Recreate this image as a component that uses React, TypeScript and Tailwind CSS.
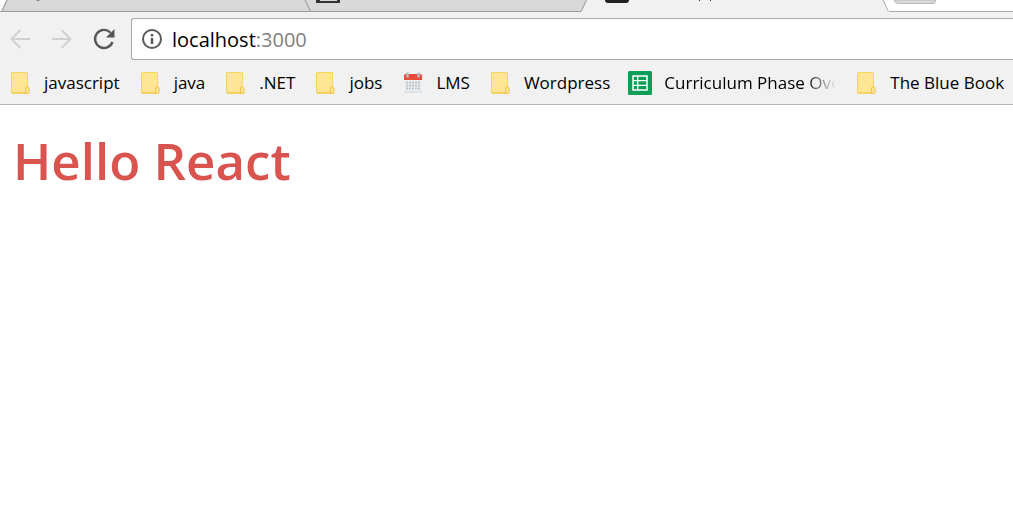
import type { ReactNode } from "react";

function FolderIcon() {
  return (
    <svg width="24" height="24" viewBox="0 0 24 24" aria-hidden="true">
      <rect x="3.5" y="1.5" width="16" height="20.500" rx="0.5" fill="#ffe694" stroke="#f7d664" />
      <path d="M4 22h16" stroke="#f3cd52" strokeWidth="1.500" />
      <path d="M3.5 2v20" stroke="#f2d169" />
      <path d="M17.5 22v-5q0-1 1.200-1h1q1.300 0 1.300 1v4.500q0 1-1 1h-2.500z" fill="#ffe694" stroke="#edc344" />
    </svg>
  );
}

function CalendarIcon() {
  return (
    <svg width="24" height="24" viewBox="0 0 24 24" aria-hidden="true">
      <rect x="4" y="5" width="18" height="16" rx="1" fill="#eceff1" />
      <path d="M4 21h18" stroke="#cfd3d6" />
      <path d="M4 9V4.500q0-1.500 1.500-1.500h15q1.500 0 1.500 1.500V9z" fill="#e94b3c" />
      <path d="M7.500 1.500v5M18.500 1.500v5" stroke="#b9bdc3" strokeWidth="2.500" />
      <path d="M6 11.500h14M6 14.500h14M6 17.500h14" stroke="#bcc3c9" strokeWidth="2" strokeDasharray="2 1" />
    </svg>
  );
}

function SheetIcon() {
  return (
    <svg width="24" height="24" viewBox="0 0 24 24" aria-hidden="true">
      <rect width="24" height="24" rx="1.500" fill="#0f9d58" />
      <rect x="5" y="5" width="14" height="14" fill="none" stroke="#fff" strokeWidth="1.500" />
      <path d="M5 9.700h14M5 14.300h14M9.700 5v14" stroke="#fff" strokeWidth="1.300" />
    </svg>
  );
}

type Bookmark = { label: string; icon: ReactNode; long?: boolean };

const bookmarks: Bookmark[] = [
  { label: "javascript", icon: <FolderIcon /> },
  { label: "java", icon: <FolderIcon /> },
  { label: ".NET", icon: <FolderIcon /> },
  { label: "jobs", icon: <FolderIcon /> },
  { label: "LMS", icon: <CalendarIcon /> },
  { label: "Wordpress", icon: <FolderIcon /> },
  { label: "Curriculum Phase Ove", icon: <SheetIcon />, long: true },
  { label: "The Blue Book", icon: <FolderIcon /> },
];

function TabStrip() {
  return (
    <svg className="block h-3 w-full" height="12" aria-hidden="true">
      <rect width="100%" height="12" fill="#fff" />
      <path d="M1 12L7 0H587L582 12z" fill="#d9d9d9" />
      <path d="M582 12L587 0H883L889 12z" fill="#f1f1f1" />
      <path d="M0 11.500H581L586.500 0" fill="none" stroke="#999" />
      <path d="M1.500 12L7 0M305 0L310.500 11.500" fill="none" stroke="#aaa" strokeWidth="1.500" />
      <path d="M883 0L888 10.500Q888.500 11.500 890 11.500H4000" fill="none" stroke="#aaa" />
      <path d="M36 0q2 2 4 0z" fill="#777" />
      <path d="M316 0v3h24V0h-3v1h-17V0z" fill="#333" />
      <path d="M605 0h24q0 3-3 3h-18q-3 0-3-3z" fill="#222" />
      <path d="M699.500 0v1M710.500 0v1" stroke="#234" />
      <path d="M894 0q1.500 3.500 4 3.500h35q3 0 2.500-3.500z" fill="#d9d9d9" stroke="#bbb" />
    </svg>
  );
}

export default function App() {
  return (
    <div className="min-h-screen bg-white font-['Open_Sans','Noto_Sans',sans-serif] text-black">
      <header className="overflow-hidden border-b border-[#b6b6b6] bg-[#f1f1f1]">
        <TabStrip />
        <div className="flex items-center pt-[6px] pl-2">
          <button type="button" aria-label="Back" disabled className="mr-[18px]">
            <svg width="24" height="24" viewBox="0 0 24 24" fill="none" stroke="#d0d0d0" strokeWidth="2">
              <path d="M22 12H4M12.500 3L3.500 12L12.500 21" />
            </svg>
          </button>
          <button type="button" aria-label="Forward" disabled className="mr-[18px]">
            <svg width="24" height="24" viewBox="0 0 24 24" fill="none" stroke="#d0d0d0" strokeWidth="2">
              <path d="M2 12H20M11.500 3L20.500 12L11.500 21" />
            </svg>
          </button>
          <button type="button" aria-label="Reload" className="mr-[15px]">
            <svg width="24" height="24" viewBox="0 0 24 24" fill="none">
              <path d="M20.500 15A9 9 0 1 1 18.500 5.700" stroke="#555" strokeWidth="2.300" />
              <path d="M22.500 2V10.500H14z" fill="#555" />
            </svg>
          </button>
          <div className="flex h-[42px] flex-1 items-center gap-2 rounded-l-[3px] border border-r-0 border-[#a8a8a8] bg-white pl-2">
            <svg width="24" height="24" viewBox="0 0 24 24" aria-hidden="true">
              <circle cx="12" cy="12" r="9" fill="none" stroke="#5a5a5a" strokeWidth="2" />
              <path d="M12 7v2.500M12 11v6" stroke="#5a5a5a" strokeWidth="2.500" />
            </svg>
            <a href="http://localhost:3000" className="pt-[2px] text-[20px] leading-6">
              localhost<span className="text-[#808080]">:3000</span>
            </a>
          </div>
        </div>
        <nav aria-label="Bookmarks" className="flex h-11 items-center gap-[18px] pt-[2px] pl-2">
          {bookmarks.map(({ label, icon, long }) => (
            <a key={label} href="#" className="flex shrink-0 items-center gap-3 text-[17px] leading-6 whitespace-nowrap">
              {icon}
              <span className={long ? "w-[172px] overflow-hidden [mask-image:linear-gradient(to_right,black_82%,transparent)]" : ""}>
                {label}
              </span>
            </a>
          ))}
        </nav>
      </header>
      <main className="px-[13px] pt-5">
        <h1 className="text-[51px] leading-[70px] font-semibold text-[#d9534f]">Hello React</h1>
      </main>
    </div>
  );
}
